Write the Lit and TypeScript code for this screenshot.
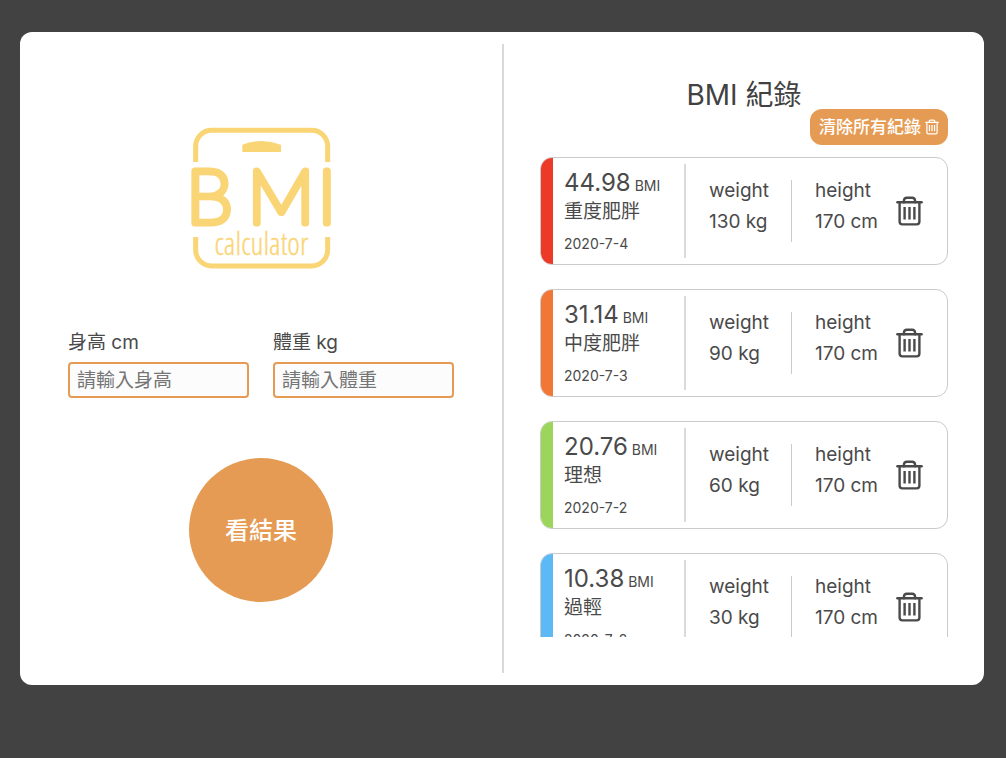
import { LitElement, html, css, svg } from "lit";
import { customElement, property } from "lit/decorators.js";

interface BmiRecord {
  bmi: string;
  level: "severe" | "moderate" | "ideal" | "under";
  label: string;
  date: string;
  weight: number;
  height: number;
}

const records: BmiRecord[] = [
  { bmi: "44.98", level: "severe", label: "重度肥胖", date: "2020-7-4", weight: 130, height: 170 },
  { bmi: "31.14", level: "moderate", label: "中度肥胖", date: "2020-7-3", weight: 90, height: 170 },
  { bmi: "20.76", level: "ideal", label: "理想", date: "2020-7-2", weight: 60, height: 170 },
  { bmi: "10.38", level: "under", label: "過輕", date: "2020-7-2", weight: 30, height: 170 },
];

const trashShape = svg`
  <path d="M1.4 6.3H25.6" />
  <path d="M7.9 6.3V4.6Q8.2 1.7 10.8 1.7H16.2Q18.8 1.7 19.1 4.6V6.3" />
  <path d="M3.6 6.3V25.6Q3.6 28.4 6.4 28.4H20.6Q23.4 28.4 23.4 25.6V6.3" />
  <path stroke-linecap="butt" d="M8.6 11V23.4M13.5 11V23.4M18.4 11V23.4" />
`;

@customElement("trash-icon")
export class TrashIcon extends LitElement {
  static styles = css`
    :host {
      display: block;
    }
    .icon {
      display: block;
      width: 100%;
      height: 100%;
      fill: none;
      stroke: currentColor;
      stroke-width: 2.4;
      stroke-linecap: round;
    }
  `;

  render() {
    return html`<svg class="icon" viewBox="0 0 27 30" aria-hidden="true">${trashShape}</svg>`;
  }
}

@customElement("bmi-logo")
export class BmiLogo extends LitElement {
  static styles = css`
    :host {
      display: block;
      width: 142px;
    }
    .logo {
      display: block;
      width: 100%;
      overflow: visible;
    }
    .frame {
      fill: none;
      stroke: #fad576;
      stroke-width: 15;
    }
    .handle {
      fill: #fad576;
    }
    .name {
      font: 100 224px Lato, sans-serif;
      fill: #fad576;
      stroke: #fad576;
      stroke-width: 21;
      stroke-linejoin: round;
    }
    .sub {
      font: 300 91px "Open Sans Condensed Light", "Open Sans Condensed", sans-serif;
      fill: #fad576;
      stroke: #fad576;
      stroke-width: 1;
    }
  `;

  render() {
    return html`
      <svg class="logo" viewBox="29 21 426 426" role="img" aria-label="BMI calculator">
        <path class="frame" d="M46 126V79a48 48 0 0 1 48-48H394a48 48 0 0 1 48 48V126" />
        <path class="frame" d="M46 351V390a48 48 0 0 0 48 48H394a48 48 0 0 0 48-48V351" />
        <path class="handle" d="M186 96V74Q244 52 302 74V96Z" />
        <text class="name" x="18 202 412" y="308">BMI</text>
        <text class="sub" x="243" y="405" text-anchor="middle">calculator</text>
      </svg>
    `;
  }
}

@customElement("bmi-record")
export class BmiRecordCard extends LitElement {
  @property({ attribute: false }) record!: BmiRecord;

  static styles = css`
    :host {
      display: block;
    }
    .card {
      display: flex;
      box-sizing: border-box;
      min-height: 108px;
      border: 1px solid #cacaca;
      border-radius: 12px;
      overflow: hidden;
    }
    .bar {
      flex: 0 0 12px;
    }
    .severe {
      background: #ed3927;
    }
    .moderate {
      background: #f07735;
    }
    .ideal {
      background: #9bd55b;
    }
    .under {
      background: #5cb9f6;
    }
    .summary {
      flex: 1 0 133px;
      box-sizing: border-box;
      margin: 6px 0;
      padding: 5px 0 0 11px;
      border-right: 2px solid #dadada;
      white-space: nowrap;
    }
    .value {
      margin: 0;
      font-size: 24px;
      line-height: 28px;
    }
    .unit {
      font-size: 14px;
    }
    .label {
      margin: 0 0 10px;
      font-size: 19px;
      line-height: 24px;
    }
    .date {
      display: block;
      font-size: 14px;
      line-height: 20px;
    }
    .metric {
      align-self: center;
      flex: 1 0 105px;
      box-sizing: border-box;
      margin: 0;
      padding-left: 23px;
      font-size: 19px;
      line-height: 21px;
      white-space: nowrap;
    }
    .metric + .metric {
      border-left: 1px solid #cacaca;
    }
    .metric dt,
    .metric dd {
      margin: 0 0 10px;
    }
    .remove {
      align-self: center;
      flex: none;
      margin: 0 24px 0 0;
      padding: 0;
      border: 0;
      background: none;
      color: #4a4a4a;
      cursor: pointer;
    }
    .trash {
      width: 27px;
      height: 30px;
    }
  `;

  render() {
    const r = this.record;
    return html`
      <article class="card">
        <div class="bar ${r.level}"></div>
        <div class="summary">
          <p class="value">${r.bmi}<span class="unit"> BMI</span></p>
          <p class="label">${r.label}</p>
          <time class="date">${r.date}</time>
        </div>
        <dl class="metric">
          <dt>weight</dt>
          <dd>${r.weight} kg</dd>
        </dl>
        <dl class="metric">
          <dt>height</dt>
          <dd>${r.height} cm</dd>
        </dl>
        <button class="remove" type="button" aria-label="清除紀錄">
          <trash-icon class="trash"></trash-icon>
        </button>
      </article>
    `;
  }
}

@customElement("app-root")
export class AppRoot extends LitElement {
  static styles = css`
    :host {
      display: block;
      box-sizing: border-box;
      min-height: 100vh;
      padding: 32px 22px 32px 20px;
      background: #424242;
      color: #4a4a4a;
      font-family: Inter, "Noto Sans CJK TC", sans-serif;
    }
    .panel {
      display: grid;
      grid-template-columns: 1fr 1fr;
      padding: 12px 0;
      border-radius: 12px;
      background: #fff;
    }
    .entry {
      display: flex;
      flex-direction: column;
      align-items: center;
      padding: 83px 48px 70px;
    }
    .fields {
      display: grid;
      grid-template-columns: 1fr 1fr;
      gap: 24px;
      width: 100%;
      margin: 60px 0;
    }
    .field {
      display: flex;
      flex-direction: column;
      gap: 5px;
      min-width: 0;
      font-size: 19px;
      line-height: 28px;
    }
    .input {
      box-sizing: border-box;
      width: 100%;
      height: 36px;
      padding: 0 7px;
      border: 2px solid #e59b53;
      border-radius: 4px;
      background: #fcfcfc;
      color: inherit;
      font: inherit;
    }
    .input::placeholder {
      color: #757575;
    }
    .submit {
      width: 144px;
      height: 144px;
      padding: 0 0 4px;
      border: 0;
      border-radius: 50%;
      background: #e59b53;
      color: #fff;
      font: 500 24px Inter, "Noto Sans CJK TC", sans-serif;
      cursor: pointer;
    }
    .history {
      display: flex;
      flex-direction: column;
      padding: 38px 36px 36px;
      border-left: 2px solid #d9d9d9;
    }
    .title {
      margin: 0;
      font-size: 28px;
      font-weight: 400;
      line-height: 27px;
      text-align: center;
      color: #424242;
    }
    .clear {
      display: flex;
      align-items: center;
      align-self: flex-end;
      gap: 4px;
      height: 36px;
      margin-bottom: 12px;
      padding: 0 9px;
      border: 0;
      border-radius: 12px;
      background: #e59b53;
      color: #fff;
      font: 500 17px/20px Inter, "Noto Sans CJK TC", sans-serif;
      cursor: pointer;
    }
    .clear-icon {
      width: 14px;
      height: 16px;
    }
    .list {
      display: flex;
      flex-direction: column;
      gap: 24px;
      max-height: 480px;
      margin: 0;
      padding: 0;
      list-style: none;
      overflow-y: auto;
      scrollbar-width: none;
    }
    .item {
      flex: none;
    }
  `;

  render() {
    return html`
      <main class="panel">
        <form class="entry">
          <bmi-logo></bmi-logo>
          <div class="fields">
            <label class="field" for="height">
              身高 cm
              <input class="input" id="height" type="text" inputmode="decimal" placeholder="請輸入身高" />
            </label>
            <label class="field" for="weight">
              體重 kg
              <input class="input" id="weight" type="text" inputmode="decimal" placeholder="請輸入體重" />
            </label>
          </div>
          <button class="submit" type="button">看結果</button>
        </form>
        <section class="history">
          <h1 class="title">BMI 紀錄</h1>
          <button class="clear" type="button">
            清除所有紀錄<trash-icon class="clear-icon"></trash-icon>
          </button>
          <ul class="list">
            ${records.map(
              (r) => html`<li class="item"><bmi-record .record=${r}></bmi-record></li>`
            )}
          </ul>
        </section>
      </main>
    `;
  }
}
